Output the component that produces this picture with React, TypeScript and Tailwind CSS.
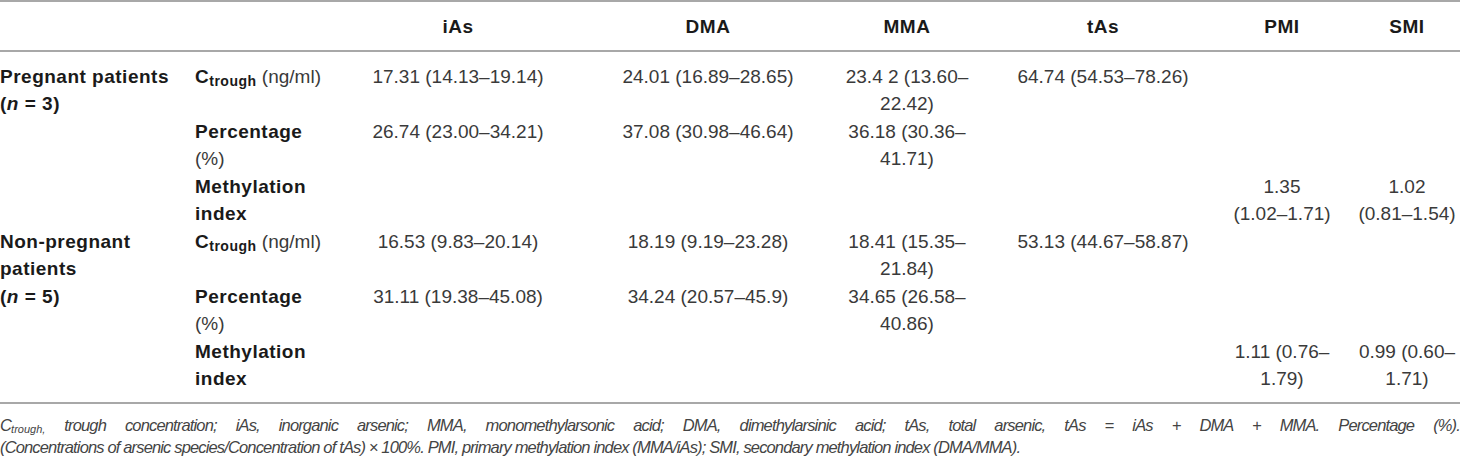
import React from "react";

type Row = {
  group?: { label: string; n: number };
  measure: React.ReactNode;
  cells: React.ReactNode[];
};

const Ctrough = () => (
  <>
    <span className="font-bold tracking-[0.5px] text-[#1a1a1a]">
      C<sub className="text-[14px]">trough</sub>
    </span>{" "}
    (ng/ml)
  </>
);

const Percentage = () => (
  <>
    <span className="font-bold tracking-[0.5px] text-[#1a1a1a]">Percentage</span>
    <br />
    (%)
  </>
);

const Methylation = () => (
  <span className="font-bold tracking-[0.5px] text-[#1a1a1a]">
    Methylation
    <br />
    index
  </span>
);

const ROWS: Row[] = [
  {
    group: { label: "Pregnant patients", n: 3 },
    measure: <Ctrough />,
    cells: [
      "17.31 (14.13–19.14)",
      "24.01 (16.89–28.65)",
      <>23.4 2 (13.60–<br />22.42)</>,
      "64.74 (54.53–78.26)",
      "",
      "",
    ],
  },
  {
    measure: <Percentage />,
    cells: [
      "26.74 (23.00–34.21)",
      "37.08 (30.98–46.64)",
      <>36.18 (30.36–<br />41.71)</>,
      "",
      "",
      "",
    ],
  },
  {
    measure: <Methylation />,
    cells: ["", "", "", "", <>1.35<br />(1.02–1.71)</>, <>1.02<br />(0.81–1.54)</>],
  },
  {
    group: { label: "Non-pregnant patients", n: 5 },
    measure: <Ctrough />,
    cells: [
      "16.53 (9.83–20.14)",
      "18.19 (9.19–23.28)",
      <>18.41 (15.35–<br />21.84)</>,
      "53.13 (44.67–58.87)",
      "",
      "",
    ],
  },
  {
    measure: <Percentage />,
    cells: [
      "31.11 (19.38–45.08)",
      "34.24 (20.57–45.9)",
      <>34.65 (26.58–<br />40.86)</>,
      "",
      "",
      "",
    ],
  },
  {
    measure: <Methylation />,
    cells: ["", "", "", "", <>1.11 (0.76–<br />1.79)</>, <>0.99 (0.60–<br />1.71)</>],
  },
];

const HEADERS = ["iAs", "DMA", "MMA", "tAs", "PMI", "SMI"];

export default function App() {
  return (
    <div className="w-[1460px] h-[460px] overflow-hidden bg-white font-['Liberation_Sans',Arial,sans-serif] text-[#3a3a3a]">
      <table className="w-[1460px] table-fixed border-collapse text-[19px] leading-[27.5px]">
        <colgroup>
          <col className="w-[195px]" />
          <col className="w-[135px]" />
          <col className="w-[256px]" />
          <col className="w-[244px]" />
          <col className="w-[154px]" />
          <col className="w-[238px]" />
          <col className="w-[120px]" />
          <col className="w-[118px]" />
        </colgroup>
        <thead>
          <tr className="border-t-2 border-b-2 border-[#a8a8a8]">
            <th className="pt-[11px] pb-[9px]" />
            <th />
            {HEADERS.map((h, i) => (
              <th
                key={h}
                className={`pt-[11px] pb-[9px] text-center font-bold tracking-[0.5px] text-[#1a1a1a] ${
                  i === 5 ? "pl-[12px]" : ""
                }`}
              >
                {h}
              </th>
            ))}
          </tr>
        </thead>
        <tbody className="border-b-2 border-[#a8a8a8]">
          {ROWS.map((row, ri) => {
            const pad = ri === 0 ? "pt-[11px]" : ri === ROWS.length - 1 ? "pb-[9px]" : "";
            return (
              <tr key={ri}>
                {row.group && (
                  <td
                    rowSpan={3}
                    className={`align-top text-left font-bold tracking-[0.5px] text-[#1a1a1a] pr-[10px] ${pad}`}
                  >
                    {row.group.label}
                    <br />
                    (<i>n</i> = {row.group.n})
                  </td>
                )}
                <td className={`align-top text-left ${pad}`}>{row.measure}</td>
                {row.cells.map((c, ci) => (
                  <td
                    key={ci}
                    className={`align-top text-center ${pad} ${ci === 5 ? "pl-[12px]" : ""}`}
                  >
                    {c}
                  </td>
                ))}
              </tr>
            );
          })}
        </tbody>
      </table>

      {/* footnote */}
      <div className="mt-[10px] italic text-[16.5px] leading-[22px] tracking-[-0.85px] text-[#444]">
        <p className="text-justify [text-align-last:justify]">
          C<sub className="text-[11px] tracking-normal">trough,</sub> trough concentration; iAs,
          inorganic arsenic; MMA, monomethylarsonic acid; DMA, dimethylarsinic acid; tAs, total
          arsenic, tAs = iAs + DMA + MMA. Percentage (%).
        </p>
        <p>
          (Concentrations of arsenic species/Concentration of tAs) × 100%. PMI, primary methylation
          index (MMA/iAs); SMI, secondary methylation index (DMA/MMA).
        </p>
      </div>
    </div>
  );
}
